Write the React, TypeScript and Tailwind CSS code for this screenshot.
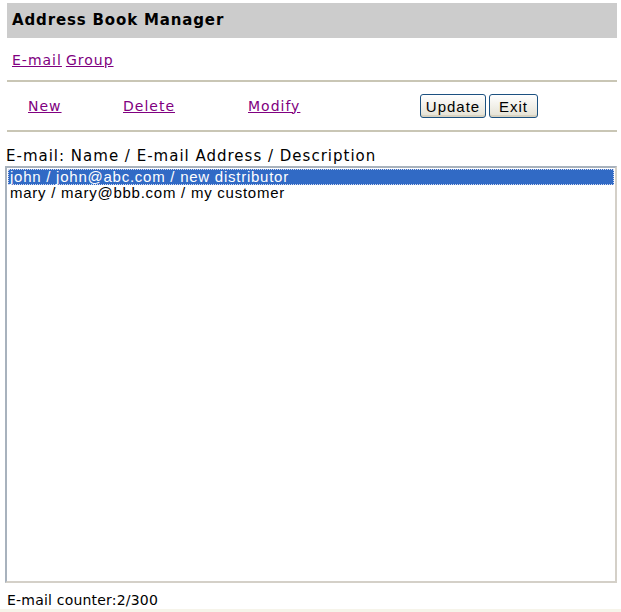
import { useState } from "react";

const entries = [
  "john / john@abc.com / new distributor",
  "mary / mary@bbb.com / my customer",
];

const verdana = { fontFamily: '"DejaVu Sans", Verdana, sans-serif' };
const arial = { fontFamily: '"Liberation Sans", Arial, sans-serif' };

function XpButton({ label, width }: { label: string; width: string }) {
  return (
    <button
      type="button"
      className={`${width} h-[24px] rounded-[3px] border border-[#1c5180] bg-gradient-to-b from-white to-[#e4e1d4] text-[15px] leading-none text-black shadow-[inset_0_-2px_0_#d8d2c0]`}
      style={arial}
    >
      {label}
    </button>
  );
}

export default function App() {
  const [selected, setSelected] = useState(0);

  return (
    <div className="flex h-[612px] w-[621px] flex-col bg-white text-black">
      <div className="flex flex-1 flex-col pl-[7px] pr-[4px] pt-[3px]">
        <div className="flex h-[35px] items-center bg-[#cccccc] px-[5px]">
          <h1 className="text-[15px] font-bold tracking-[0.85px]" style={verdana}>
            Address Book Manager
          </h1>
        </div>

        <div
          className="flex h-[42px] items-center gap-[4px] px-[5px] pt-[2px] text-[14px] tracking-[1px]"
          style={verdana}
        >
          <a href="#" className="text-[#800080] underline">E-mail</a>
          <a href="#" className="text-[#800080] underline">Group</a>
        </div>

        <div className="h-[2px] bg-[#c9c6b5]" />

        <div
          className="grid h-[48px] grid-cols-[95px_125px_172px_auto] items-center pl-[21px] text-[14px] tracking-[1px]"
          style={verdana}
        >
          <a href="#" className="justify-self-start text-[#800080] underline">New</a>
          <a href="#" className="justify-self-start text-[#800080] underline">Delete</a>
          <a href="#" className="justify-self-start text-[#800080] underline">Modify</a>
          <div className="flex gap-[3px]">
            <XpButton label="Update" width="w-[66px]" />
            <XpButton label="Exit" width="w-[49px]" />
          </div>
        </div>

        <div className="h-[2px] bg-[#c9c6b5]" />

        <div className="-ml-[1px] mt-[15px] text-[15px] leading-[18px] tracking-[1px]" style={verdana}>
          E-mail: Name / E-mail Address / Description
        </div>

        <ul
          className="-ml-[2px] mt-[1px] h-[417px] border-2 border-[#a8b2bd] border-b-[#d4d0c8] border-r-[#d4d0c8] bg-white p-[1px] text-[15px] leading-[16px] tracking-[0.75px]"
          style={arial}
        >
          {entries.map((e, i) => (
            <li
              key={e}
              onClick={() => setSelected(i)}
              className={
                i === selected
                  ? "cursor-default bg-[#316ac5] px-[2px] text-white outline-1 outline-dotted outline-[#d0d8f0] -outline-offset-1"
                  : "cursor-default px-[2px]"
              }
            >
              {e}
            </li>
          ))}
        </ul>

        <div className="mt-[9px] text-[14px] leading-[17px] tracking-[0.2px]" style={verdana}>
          E-mail counter:2/300
        </div>
      </div>
      <div className="h-[4px] bg-[#f6f4ea]" />
    </div>
  );
}
